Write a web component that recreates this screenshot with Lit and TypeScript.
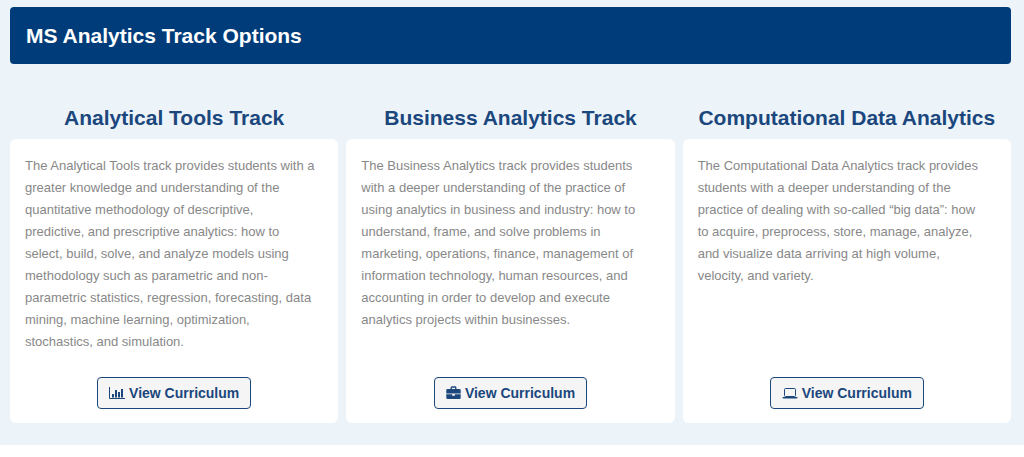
import { LitElement, html, css, svg } from "lit";
import { customElement } from "lit/decorators.js";

const chartIcon = svg`
  <path fill="none" stroke="currentColor" stroke-width="1" d="M.5 1V12.500H16" />
  <path fill="currentColor" d="M3 8h2v3.500H3zM6 4h2v7.500H6zM9 6h2v5.500H9zM12 3h2v8.500h-2z" />`;

const briefcaseIcon = svg`
  <path fill="none" stroke="currentColor" stroke-width="1.300" d="M5.200 3.500V1.700q0-.7.7-.7h3.200q.7 0 .7.700v1.800" />
  <path fill="currentColor" d="M1.500 3h12q1.200 0 1.200 1.200V7.500H.3V4.200Q.3 3 1.500 3zM.3 8.300h5.900v1.500h2.600V8.300h5.900v3.500q0 1.200-1.200 1.200h-12Q.3 13 .3 11.800z" />`;

const laptopIcon = svg`
  <rect x="2.500" y="2.500" width="11" height="8" rx="1" fill="none" stroke="currentColor" />
  <path fill="currentColor" d="M.5 11h15v.5q0 1-1.200 1H1.700q-1.200 0-1.200-1z" />`;

const tracks = [
  {
    title: "Analytical Tools Track",
    text: "The Analytical Tools track provides students with a greater knowledge and understanding of the quantitative methodology of descriptive, predictive, and prescriptive analytics: how to select, build, solve, and analyze models using methodology such as parametric and non-parametric statistics, regression, forecasting, data mining, machine learning, optimization, stochastics, and simulation.",
    icon: html`<svg width="16" height="14" viewBox="0 0 16 14" aria-hidden="true">${chartIcon}</svg>`,
  },
  {
    title: "Business Analytics Track",
    text: "The Business Analytics track provides students with a deeper understanding of the practice of using analytics in business and industry: how to understand, frame, and solve problems in marketing, operations, finance, management of information technology, human resources, and accounting in order to develop and execute analytics projects within businesses.",
    icon: html`<svg width="15" height="14" viewBox="0 0 15 14" aria-hidden="true">${briefcaseIcon}</svg>`,
  },
  {
    title: "Computational Data Analytics",
    text: "The Computational Data Analytics track provides students with a deeper understanding of the practice of dealing with so-called “big data”: how to acquire, preprocess, store, manage, analyze, and visualize data arriving at high volume, velocity, and variety.",
    icon: html`<svg width="16" height="14" viewBox="0 0 16 14" aria-hidden="true">${laptopIcon}</svg>`,
  },
];

@customElement("app-root")
export class AppRoot extends LitElement {
  static styles = css`
    :host {
      display: block;
      font-family: "Liberation Sans", Arial, sans-serif;
      color: #888;
    }
    .section {
      background: #ecf4fa;
      padding: 7px 13px 22px 10px;
    }
    .banner {
      margin: 0;
      padding: 16px;
      border-radius: 4px;
      background: #003c7a;
      color: #fff;
      font-size: 21px;
      line-height: 25px;
    }
    .tracks {
      display: grid;
      grid-template-columns: repeat(3, minmax(0, 1fr));
      column-gap: 8px;
      margin-top: 40px;
    }
    .track {
      display: flex;
      flex-direction: column;
    }
    .title {
      margin: 0 0 8px;
      color: #1b477d;
      font-size: 21px;
      line-height: 27px;
      text-align: center;
      white-space: nowrap;
    }
    .card {
      flex: 1;
      display: flex;
      flex-direction: column;
      align-items: center;
      padding: 16px 15px 14px;
      border-radius: 6px;
      background: #fff;
    }
    .text {
      align-self: stretch;
      margin: 0 0 24px;
      padding-right: 8px;
      font-size: 13px;
      line-height: 22px;
    }
    .button {
      display: flex;
      align-items: center;
      gap: 4px;
      margin-top: auto;
      padding: 5px 11px;
      border: 1px solid #1b477d;
      border-radius: 4px;
      background: #f5f5f5;
      color: #1b477d;
      font-size: 14px;
      font-weight: bold;
      line-height: 20px;
      text-decoration: none;
    }
  `;

  render() {
    return html`
      <section class="section">
        <h2 class="banner">MS Analytics Track Options</h2>
        <div class="tracks">
          ${tracks.map(
            (track) => html`
              <article class="track">
                <h3 class="title">${track.title}</h3>
                <div class="card">
                  <p class="text">${track.text}</p>
                  <a class="button" href="#">${track.icon}<span>View Curriculum</span></a>
                </div>
              </article>
            `,
          )}
        </div>
      </section>
    `;
  }
}
